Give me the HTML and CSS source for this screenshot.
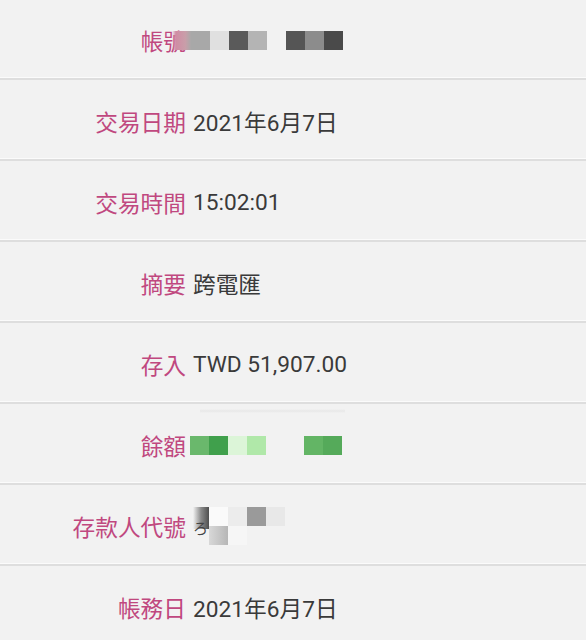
FILE: index.html
```html
<!DOCTYPE html>
<html lang="zh-Hant">
<head>
  <meta charset="UTF-8" />
  <meta name="viewport" content="width=device-width, initial-scale=1.0"/>
  <title>交易明細</title>
  <link rel="stylesheet" href="styles.css">
</head>
<body>

  <div class="detail">
    <div class="row">
      <div class="label">帳號</div>
      <div class="value">
        <div class="mosaic account">
          <span class="fade-pink"></span>
          <span class="c-a8"></span>
          <span class="c-e0"></span>
          <span class="c-5a"></span>
          <span class="c-b4"></span>
          <span></span>
          <span class="c-55"></span>
          <span class="c-8c"></span>
          <span class="c-4a"></span>
        </div>
      </div>
    </div>

    <div class="row">
      <div class="label">交易日期</div>
      <div class="value">2021年6月7日</div>
    </div>

    <div class="row">
      <div class="label">交易時間</div>
      <div class="value">15:02:01</div>
    </div>

    <div class="row">
      <div class="label">摘要</div>
      <div class="value">跨電匯</div>
    </div>

    <div class="row">
      <div class="label">存入</div>
      <div class="value">TWD 51,907.00</div>
    </div>

    <div class="row smudge">
      <div class="label">餘額</div>
      <div class="value">
        <div class="mosaic balance">
          <span class="g-1"></span>
          <span class="g-2"></span>
          <span class="g-3"></span>
          <span class="g-4"></span>
          <span></span>
          <span></span>
          <span class="g-5"></span>
          <span class="g-6"></span>
        </div>
      </div>
    </div>

    <div class="row">
      <div class="label">存款人代號</div>
      <div class="value">
        <div class="mosaic depositor">
          <span class="d-edge">ろ</span>
          <span class="c-fa"></span>
          <span class="c-ec"></span>
          <span class="c-9a"></span>
          <span class="c-e6"></span>
          <span class="d-low"></span>
          <span class="c-f6"></span>
        </div>
      </div>
    </div>

    <div class="row">
      <div class="label">帳務日</div>
      <div class="value">2021年6月7日</div>
    </div>
  </div>

</body>
</html>
```

FILE: styles.css
```css
body {
  margin: 0;
  background: #f2f2f2;
  font-family: Roboto, "Noto Sans CJK TC", sans-serif;
  overflow: hidden;
}
.row {
  display: grid;
  grid-template-columns: 186px 1fr;
  column-gap: 7px;
  align-items: center;
  height: 76px;
  padding-top: 3px;
  border-bottom: 2px solid #dedede;
  box-shadow: inset 0 -1px 0 #fbfbfb;
}
.row:first-child {
  height: 75px;
}
.label {
  text-align: right;
  color: #c0487f;
  font-size: 22.7px;
  white-space: nowrap;
}
.value {
  color: #3a3a3a;
  font-size: 22.7px;
  white-space: nowrap;
}
.mosaic {
  display: grid;
  grid-auto-rows: 19px;
}
.mosaic span {
  display: block;
}
.account {
  grid-template-columns: repeat(9, 19px);
  margin-left: -21px;
}
.fade-pink { background: linear-gradient(to right, rgba(208, 130, 158, 0), #d08ca4 20%, #c99ea9 70%, #a9a9a9); }
.c-a8 { background: #a8a8a8; }
.c-e0 { background: #e0e0e0; }
.c-5a { background: #5a5a5a; }
.c-b4 { background: #b4b4b4; }
.c-55 { background: #555; }
.c-8c { background: #8c8c8c; }
.c-4a { background: #4a4a4a; }
.c-fa { background: #fafafa; }
.c-ec { background: #ececec; }
.c-9a { background: #9a9a9a; }
.c-e6 { background: #e8e8e8; }
.c-f6 { background: #f6f6f6; }

.balance {
  grid-template-columns: repeat(8, 19px);
  margin-left: -3px;
}
.g-1 { background: #6ab86c; }
.g-2 { background: #40a04c; }
.g-3 { background: #dcf5d8; }
.g-4 { background: #b0e8a9; }
.g-5 { background: #63b565; }
.g-6 { background: #55aa5a; }
.smudge {
  background: linear-gradient(to bottom, #f2f2f2 5px, #e8e8e8 7px, #f2f2f2 9px) no-repeat 200px 0 / 145px 100%;
}

.depositor {
  grid-template-columns: 16px repeat(4, 19px);
}
.d-edge {
  grid-row: span 2;
  background: linear-gradient(to right, rgba(242, 242, 242, 0), #8a8a8a 50%, #4f4f4f) no-repeat 0 0 / 100% 22px;
  font-size: 15px;
  line-height: 16px;
  padding-top: 14px;
  box-sizing: border-box;
  color: #444;
}
.d-low { background: linear-gradient(to right, #d8d8d8, #b6b6b6); }
```
